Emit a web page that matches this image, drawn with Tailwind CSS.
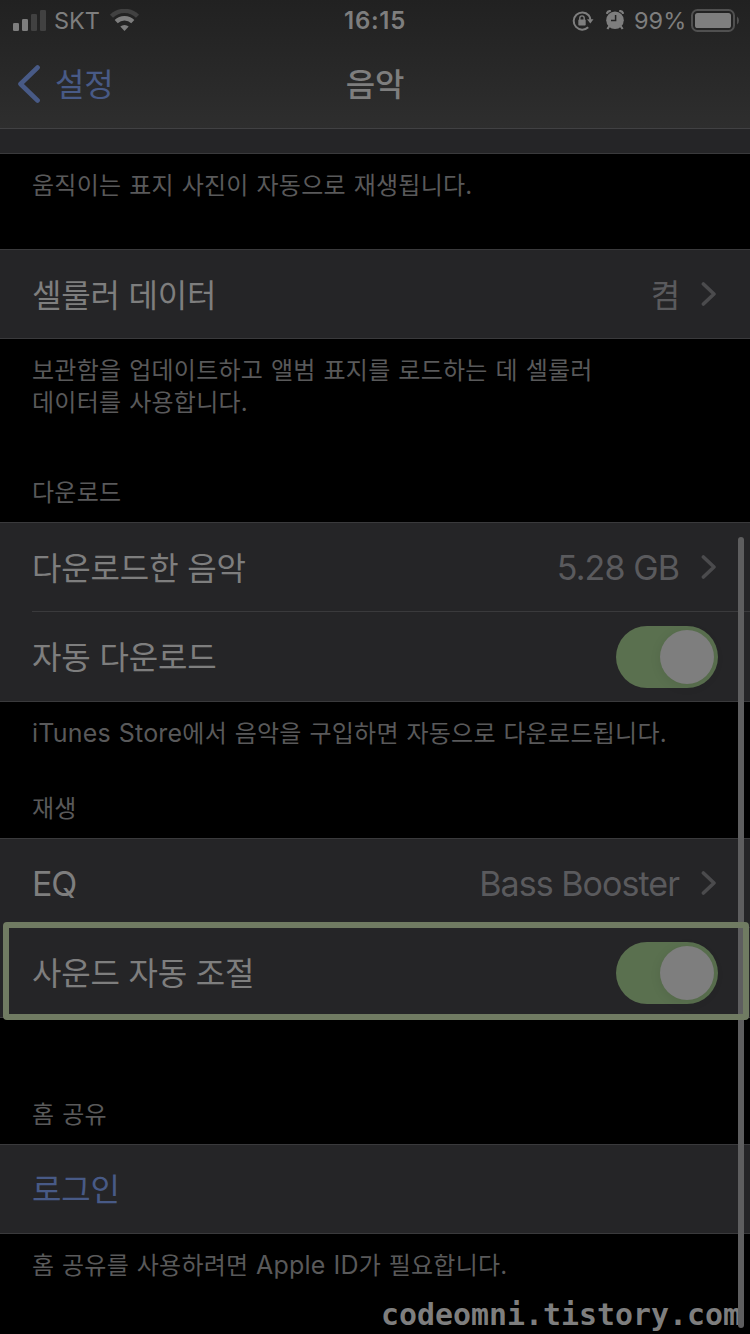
<!DOCTYPE html>
<html lang="ko">
<head>
    <meta charset="UTF-8">
    <meta name="viewport" content="width=device-width, initial-scale=1.0">
    <title>음악</title>
    <script src="https://cdn.jsdelivr.net/npm/@tailwindcss/browser@4"></script>
</head>
<body class="bg-black">
<div class="relative flex flex-col w-[750px] h-[1334px] overflow-hidden bg-black font-[Inter,'Noto_Sans_CJK_KR',sans-serif] text-[#7e7e7e] whitespace-nowrap">

    <!-- Header -->
    <header class="h-[129px] shrink-0 bg-linear-to-b from-[#212121] to-[#2e2e2e] border-b border-[#414143]">
        <!-- Status bar -->
        <div class="grid grid-cols-[1fr_auto_1fr] items-center h-10 text-[23.5px] leading-10">
            <div class="flex items-center pl-[13px]">
                <svg class="w-[33px] h-[22px]" viewBox="0 0 33 22" fill="#7e7e7e">
                    <rect x="0" y="13" width="6" height="8" rx="1.3"/>
                    <rect x="9" y="9" width="6" height="12" rx="1.3"/>
                    <rect x="18" y="4" width="6" height="17" rx="1.3" fill="#414141"/>
                    <rect x="27" y="0" width="6" height="21" rx="1.3" fill="#414141"/>
                </svg>
                <span class="ml-2 w-[47px] pt-px">SKT</span>
                <svg class="ml-2 w-[31px] h-[23px]" viewBox="0 0 31 23" fill="none" stroke="#7e7e7e" stroke-width="4.4">
                    <path d="M2.5 7.2A18.6 18.6 0 0 1 28.5 7.2" stroke="#414141"/>
                    <path d="M7.2 12.6A11.8 11.8 0 0 1 23.8 12.6"/>
                    <path d="M11.3 17.6A6 6 0 0 1 19.7 17.6L15.5 22Z" fill="#7e7e7e" stroke="none"/>
                </svg>
            </div>
            <div class="pt-px text-[24px] font-semibold tracking-[0.7px]">16:15</div>
            <div class="flex items-center justify-end pr-[11px]">
                <svg class="w-[22px] h-[20px]" viewBox="0 0 22 20" fill="none" stroke="#7e7e7e" stroke-width="2">
                    <path d="M16.6 4.2A8.6 8.6 0 1 0 16.2 16.3M16.6 4.2Q18 6 18.4 9"/>
                    <path d="M15 8.2H21.5L18.3 12.4Z" fill="#7e7e7e" stroke="none"/>
                    <rect x="6.3" y="8.6" width="7.4" height="6" rx="0.8" fill="#7e7e7e" stroke="none"/>
                    <path d="M7.8 9V7.1A2.2 2.2 0 0 1 12.2 7.1V9" stroke-width="1.4"/>
                </svg>
                <svg class="ml-3 w-[18px] h-[20px] -mt-px" viewBox="0 0 18 20" fill="none" stroke="#7e7e7e">
                    <circle cx="9" cy="10.3" r="8.8" fill="#7e7e7e" stroke="none"/>
                    <path d="M0.8 3.8Q1.4 1 4.8 1M17.2 3.8Q16.6 1 13.2 1" stroke-width="2.2"/>
                    <path d="M3.4 16L1.4 19M14.6 16L16.6 19" stroke-width="2.2"/>
                    <path d="M9.6 5V10.5H5" stroke="#242424" stroke-width="1.5"/>
                </svg>
                <span class="ml-[10px] w-[52px] pt-px">99%</span>
                <svg class="ml-[5px] w-[48px] h-[23px] -mt-px" viewBox="0 0 48 23" fill="none">
                    <rect x="1" y="1" width="42" height="21" rx="5.5" stroke="#505050" stroke-width="2"/>
                    <rect x="4" y="4" width="36" height="15" rx="2.6" fill="#7e7e7e"/>
                    <path d="M46 7.6Q48 9 48 11.5Q48 14 46 15.4Z" fill="#505050"/>
                </svg>
            </div>
        </div>
        <!-- Nav bar -->
        <div class="grid grid-cols-3 items-center h-[88px] text-[32px]">
            <div class="flex items-center pl-[17px] text-[#485a86]">
                <svg class="w-6 h-[38px]" viewBox="0 0 24 38" fill="none" stroke="currentColor" stroke-width="4.6" stroke-linecap="round" stroke-linejoin="round">
                    <path d="M20.6 2.5L3.5 19L20.6 35.5"/>
                </svg>
                <span class="ml-[14px] pt-0.5 tracking-[-0.3px]">설정</span>
            </div>
            <h1 class="pt-0.5 text-center font-medium tracking-[-0.3px]">음악</h1>
        </div>
    </header>

    <!-- Artwork -->
    <div class="h-[25px] shrink-0 bg-[#252527] border-b border-[#3a3a3c]"></div>
    <p class="h-[95px] shrink-0 pl-8 pt-4 text-[24px] leading-8 tracking-[0.25px] [word-spacing:0.85px] text-[#59595a]">움직이는 표지 사진이 자동으로 재생됩니다.</p>

    <!-- Cellular data -->
    <div class="flex items-center h-[90px] shrink-0 pl-8 pr-[33px] bg-[#252527] border-y border-[#3a3a3c] text-[32px] tracking-[-0.2px]">
        <span class="grow pt-[3px]">셀룰러 데이터</span>
        <span class="pt-[3px] text-[#5a5a5d]">켬</span>
        <svg class="ml-[21px] w-4 h-6" viewBox="0 0 16 24" fill="none" stroke="#4b4b4d" stroke-width="3.6" stroke-linecap="round" stroke-linejoin="round">
            <path d="M2.4 2L13 12L2.4 22"/>
        </svg>
    </div>
    <p class="h-[138px] shrink-0 pl-8 pt-4 text-[24px] leading-8 tracking-[0.25px] [word-spacing:0.85px] text-[#59595a]">보관함을 업데이트하고 앨범 표지를 로드하는 데 셀룰러<br>데이터를 사용합니다.</p>

    <!-- Downloads -->
    <h2 class="h-[45px] shrink-0 pl-8 text-[24px] leading-8 tracking-[0.25px] text-[#59595a]">다운로드</h2>
    <div class="shrink-0 h-[180px] bg-[#252527] border-y border-[#3a3a3c] text-[32px] tracking-[-0.15px]">
        <div class="flex items-center h-[89px] ml-8 pr-[33px] border-b border-[#3a3a3c]">
            <span class="grow pt-[3px]">다운로드한 음악</span>
            <span class="text-[34px] tracking-[-0.9px] text-[#5a5a5d]">5.28 GB</span>
            <svg class="ml-[22px] w-4 h-6" viewBox="0 0 16 24" fill="none" stroke="#4b4b4d" stroke-width="3.6" stroke-linecap="round" stroke-linejoin="round">
                <path d="M2.4 2L13 12L2.4 22"/>
            </svg>
        </div>
        <div class="flex items-center justify-between h-[89px] pl-8 pr-8">
            <span class="pt-[3px]">자동 다운로드</span>
            <div class="flex items-center justify-end w-[102px] h-[62px] pr-1 rounded-full bg-[#5a704f]">
                <div class="size-[54px] rounded-full bg-[#7e7e7e] shadow-[0_2px_12px_rgba(0,0,0,0.08)]"></div>
            </div>
        </div>
    </div>
    <p class="h-[91px] shrink-0 pl-8 pt-[15px] text-[24px] leading-8 tracking-[0.25px] [word-spacing:0.7px] text-[#59595a]"><span class="text-[25px] tracking-[0.2px]">iTunes Store</span>에서 음악을 구입하면 자동으로 다운로드됩니다.</p>

    <!-- Playback -->
    <h2 class="h-[45px] shrink-0 pl-8 text-[24px] leading-8 tracking-[0.25px] text-[#59595a]">재생</h2>
    <div class="relative shrink-0 h-[180px] bg-[#252527] border-y border-[#3a3a3c] text-[32px] tracking-[-0.2px]">
        <div class="flex items-center h-[89px] ml-8 pr-[33px] border-b border-[#3a3a3c]">
            <span class="grow text-[34px] tracking-[-1.2px]">EQ</span>
            <span class="text-[34px] tracking-[-0.95px] text-[#5a5a5d]">Bass Booster</span>
            <svg class="ml-[22px] w-4 h-6" viewBox="0 0 16 24" fill="none" stroke="#4b4b4d" stroke-width="3.6" stroke-linecap="round" stroke-linejoin="round">
                <path d="M2.4 2L13 12L2.4 22"/>
            </svg>
        </div>
        <div class="flex items-center justify-between h-[89px] pl-8 pr-8">
            <span class="pt-[3px]">사운드 자동 조절</span>
            <div class="flex items-center justify-end w-[102px] h-[62px] pr-1 rounded-full bg-[#5a704f]">
                <div class="size-[54px] rounded-full bg-[#7e7e7e] shadow-[0_2px_12px_rgba(0,0,0,0.08)]"></div>
            </div>
        </div>
        <!-- Highlight -->
        <div class="absolute z-20 left-[3px] top-[83px] w-[746px] h-[98px] rounded-[4px] border-[6px] border-[#707b62]"></div>
    </div>

    <!-- Home sharing -->
    <h2 class="h-[126px] shrink-0 pl-8 pt-[81px] text-[24px] leading-8 tracking-[0.25px] [word-spacing:0.85px] text-[#59595a]">홈 공유</h2>
    <div class="flex items-center h-[90px] shrink-0 pl-8 pt-0.5 bg-[#252527] border-y border-[#3a3a3c] text-[32px] tracking-[-0.2px] text-[#485a86]">로그인</div>
    <p class="pl-8 pt-[15px] text-[24px] leading-8 tracking-[0.25px] [word-spacing:0.7px] text-[#59595a]">홈 공유를 사용하려면 <span class="text-[25px] tracking-[0.2px]">Apple ID</span>가 필요합니다.</p>

    <!-- Scrollbar -->
    <div class="absolute z-10 left-[738px] top-[537px] w-1.5 h-[791px] rounded-full bg-[#5e5e5f]"></div>

    <!-- Watermark -->
    <div class="absolute left-[381px] top-[1297px] text-[29.9px] leading-9 font-bold font-['DejaVu_Sans_Mono',monospace]">codeomni.tistory.com</div>
</div>
</body>
</html>
